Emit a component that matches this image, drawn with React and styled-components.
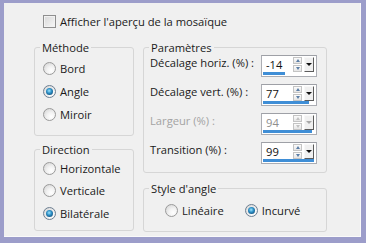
import styled, { createGlobalStyle } from 'styled-components'

const Global = createGlobalStyle`
  html, body {
    margin: 0;
    padding: 0;
    background: #9c9dca;
  }
  body {
    font-family: "Open Sans", "Noto Sans", sans-serif;
    font-size: 11.2px;
    color: #1a1a1a;
  }
`

const Frame = styled.div`
  width: 366px;
  height: 243px;
  box-sizing: border-box;
  padding: 3px 5px 6px 4px;
  background: #9c9dca;
`

const Panel = styled.div`
  height: 100%;
  box-sizing: border-box;
  background: #f0f0f0;
  border-right: 1px solid #fafafa;
  border-bottom: 1px solid #fafafa;
  padding: 12px 0 0 30px;
  display: flex;
  flex-direction: column;
  gap: 12px;
`

const Header = styled.label`
  display: flex;
  align-items: center;
  gap: 4px;
  margin-left: 9px;
  height: 13px;
  line-height: 13px;
`

const Check = styled.span`
  width: 13px;
  height: 13px;
  box-sizing: border-box;
  border: 1px solid #8f8f8f;
  background: linear-gradient(135deg, #d8d8d8, #f7f7f7);
  box-shadow: inset 0 0 0 1px #f2f2f2;
`

const Columns = styled.div`
  display: flex;
  gap: 9px;
`

const Column = styled.div`
  display: flex;
  flex-direction: column;
  gap: ${p => p.$gap}px;
  width: ${p => p.$w}px;
`

const Group = styled.fieldset`
  margin: 0;
  padding: 0;
  min-width: 0;
  box-sizing: border-box;
  height: ${p => p.$h}px;
  border: 1px solid #d6d6d6;
  border-radius: 3px;
`

const Legend = styled.legend`
  padding: 0 2px;
  margin-left: 5px;
  line-height: 15px;
  color: #1a1a1a;
`

const Body = styled.div`
  display: flex;
  flex-direction: ${p => (p.$row ? 'row' : 'column')};
  gap: ${p => p.$gap || 0}px;
  padding: ${p => p.$pad};
`

const Option = styled.label`
  display: flex;
  align-items: center;
  gap: 4px;
  height: ${p => p.$h}px;
  white-space: nowrap;
`

const Radio = styled.span`
  position: relative;
  flex: none;
  width: 13px;
  height: 13px;
  box-sizing: border-box;
  border-radius: 50%;
  border: 1px solid ${p => (p.$on ? '#6d7f92' : '#9a9a9a')};
  background: radial-gradient(circle at 65% 70%, #ffffff 0, #f2f2f2 40%, #cfcfcf 100%);

  &::after {
    content: '';
    display: ${p => (p.$on ? 'block' : 'none')};
    position: absolute;
    left: 2px;
    top: 2px;
    width: 7px;
    height: 7px;
    border-radius: 50%;
    background: radial-gradient(circle at 45% 40%, #9fe6ff 0, #2f92c8 40%, #0f4b78 85%);
  }
`

const ParamRow = styled.div`
  display: flex;
  height: 22px;
`

const Label = styled.span`
  flex: 1;
  white-space: nowrap;
  line-height: 16px;
  color: ${p => (p.$off ? '#a3a3a3' : '#1a1a1a')};
`

const SpinBox = styled.div`
  width: 56px;
  height: 22px;
  box-sizing: border-box;
  border: 1px solid #abadb3;
  border-top-color: #9ea0a6;
  background: #fff;
  padding: 1px 2px 1px 1px;
  display: flex;
  flex-direction: column;
`

const SpinRow = styled.div`
  flex: 1;
  display: flex;
  align-items: center;
`

const Value = styled.span`
  flex: 1;
  padding-left: 3px;
  line-height: 15px;
  color: ${p => (p.$off ? '#8e8e8e' : '#111')};
`

const Arrows = styled.div`
  display: flex;
  flex-direction: column;
  gap: 1px;
  margin-right: 2px;
`

const Arrow = styled.span`
  width: 9px;
  height: 7px;
  box-sizing: border-box;
  border: 1px solid #c4c4c4;
  background: linear-gradient(#fbfbfb, #e6e6e6);
  display: flex;
  align-items: center;
  justify-content: center;

  &::before {
    content: '';
    border-left: 2px solid transparent;
    border-right: 2px solid transparent;
    ${p => (p.$down ? 'border-top' : 'border-bottom')}: 3px solid ${p => (p.$off ? '#c2c2c2' : '#5d7fa6')};
  }
`

const Drop = styled.span`
  width: 10px;
  height: 15px;
  box-sizing: border-box;
  border: 1px solid;
  border-color: #f8f8f8 #5c5c5c #5c5c5c #f8f8f8;
  background: #f0f0f0;
  display: flex;
  align-items: center;
  justify-content: center;

  &::before {
    content: '';
    border-left: 3px solid transparent;
    border-right: 3px solid transparent;
    border-top: 3px solid ${p => (p.$off ? '#a8a8a8' : '#111')};
  }
`

const Track = styled.div`
  height: 3px;
`

const Bar = styled.div`
  height: 3px;
  background: #3f8ed6;
`

const methods = [
  { label: 'Bord', on: false },
  { label: 'Angle', on: true },
  { label: 'Miroir', on: false },
]

const directions = [
  { label: 'Horizontale', on: false },
  { label: 'Verticale', on: false },
  { label: 'Bilatérale', on: true },
]

const params = [
  { label: 'Décalage horiz. (%) :', value: -14, min: -100, max: 100 },
  { label: 'Décalage vert. (%) :', value: 77, min: -100, max: 100 },
  { label: 'Largeur (%) :', value: 94, min: 0, max: 100, off: true },
  { label: 'Transition (%) :', value: 99, min: 0, max: 100 },
]

function Spinner({ value, min, max, off }) {
  const w = Math.round(((value - min) / (max - min)) * 52)
  return (
    <SpinBox>
      <SpinRow>
        <Value $off={off}>{value}</Value>
        <Arrows>
          <Arrow $off={off} />
          <Arrow $off={off} $down />
        </Arrows>
        <Drop $off={off} />
      </SpinRow>
      <Track>
        <Bar style={{ width: w }} />
      </Track>
    </SpinBox>
  )
}

export default function App() {
  return (
    <Frame>
      <Global />
      <Panel>
        <Header>
          <Check />
          Afficher l'aperçu de la mosaïque
        </Header>
        <Columns>
          <Column $w={100} $gap={6}>
            <Group $h={96}>
              <Legend>Méthode</Legend>
              <Body $pad="2px 0 0 8px">
                {methods.map(m => (
                  <Option key={m.label} $h={23}>
                    <Radio $on={m.on} />
                    {m.label}
                  </Option>
                ))}
              </Body>
            </Group>
            <Group $h={89}>
              <Legend>Direction</Legend>
              <Body $pad="0 0 0 8px">
                {directions.map(d => (
                  <Option key={d.label} $h={22.5}>
                    <Radio $on={d.on} />
                    {d.label}
                  </Option>
                ))}
              </Body>
            </Group>
          </Column>
          <Column $w={184} $gap={8}>
            <Group $h={133}>
              <Legend>Paramètres</Legend>
              <Body $pad="0 9px 0 6px" $gap={7}>
                {params.map(p => (
                  <ParamRow key={p.label}>
                    <Label $off={p.off}>{p.label}</Label>
                    <Spinner {...p} />
                  </ParamRow>
                ))}
              </Body>
            </Group>
            <Group $h={51}>
              <Legend>Style d'angle</Legend>
              <Body $pad="3px 0 0 21px" $row $gap={21}>
                <Option $h={22}>
                  <Radio />
                  Linéaire
                </Option>
                <Option $h={22}>
                  <Radio $on />
                  Incurvé
                </Option>
              </Body>
            </Group>
          </Column>
        </Columns>
      </Panel>
    </Frame>
  )
}
